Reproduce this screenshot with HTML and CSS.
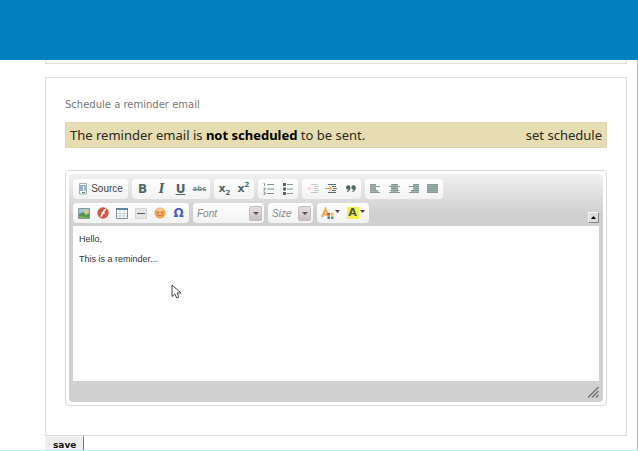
FILE: index.html
```html
<!DOCTYPE html>
<html lang="en">
<head>
  <meta charset="UTF-8">
  <meta name="viewport" content="width=device-width, initial-scale=1.0">
  <title>Schedule a reminder email</title>
  <link rel="stylesheet" href="styles.css">
</head>
<body>

  <header class="header"></header>

  <main class="content">
    <section class="panel panel-previous"></section>

    <form class="reminder">
      <section class="panel">
        <h2 class="panel-title">Schedule a reminder email</h2>

        <div class="status">
          <span>The reminder email is <b>not scheduled</b> to be sent.</span>
          <a href="#schedule">set schedule</a>
        </div>

        <div class="editor">
          <div class="editor-inner">
            <div class="toolbar">
              <div class="toolbar-row">
                <div class="group">
                  <button type="button" class="tool source">
                    <svg width="10" height="12" viewBox="0 0 10 12"><path d="M1.500 .5h7v10.500h-7z" fill="#f4fafa" stroke="#9fb0b0"/><path d="M2 2h3v6H2z" fill="#8fb4c8"/><path d="M5.500 2.500h1.500V8M4 9.500h3" fill="none" stroke="#5d7a86"/></svg>
                    Source
                  </button>
                </div>
                <div class="group">
                  <button type="button" class="tool bold" aria-label="Bold">B</button>
                  <button type="button" class="tool italic" aria-label="Italic">I</button>
                  <button type="button" class="tool underline" aria-label="Underline">U</button>
                  <button type="button" class="tool strike" aria-label="Strike Through">abc</button>
                </div>
                <div class="group">
                  <button type="button" class="tool script" aria-label="Subscript"><span>x<sub>2</sub></span></button>
                  <button type="button" class="tool script" aria-label="Superscript"><span>x<sup>2</sup></span></button>
                </div>
                <div class="group">
                  <button type="button" class="tool" aria-label="Numbered List">
                    <svg width="12" height="12" viewBox="0 0 12 12" stroke="#7d918f" fill="none"><path d="M.5 .5h1V3M.5 5h1.500v2H.5M.5 9h1.500v2.500H.5M4 1.500h7M4 6h7M4 10.500h7"/></svg>
                  </button>
                  <button type="button" class="tool" aria-label="Bulleted List">
                    <svg width="12" height="12" viewBox="0 0 12 12"><path d="M1 0h3v3H1zM1 4.500h3v3H1zM1 9h3v3H1z" fill="#4f6b6a"/><path d="M5 1.500h6M5 6h6M5 10.500h6" stroke="#8a9e9c"/></svg>
                  </button>
                </div>
                <div class="group">
                  <button type="button" class="tool" aria-label="Decrease Indent" disabled>
                    <svg width="13" height="10" viewBox="0 0 13 10" opacity=".35"><path d="M5 .5h7M8 2.500h5M8 4.500h4M8 6.500h5M5 8.500h7" stroke="#52706c"/><path d="M7 4.500H2M4 2.500l-2 2 2 2" fill="none" stroke="#e58a5c"/></svg>
                  </button>
                  <button type="button" class="tool" aria-label="Increase Indent">
                    <svg width="13" height="10" viewBox="0 0 13 10"><path d="M3 .5h8M7 2.500h4M8 4.500h4M7 6.500h4M3 8.500h8" stroke="#566f6b"/><path d="M0 4.500h6M4 2l2.500 2.500L4 7" fill="none" stroke="#ee9d4c"/></svg>
                  </button>
                  <button type="button" class="tool" aria-label="Block Quote">
                    <svg width="10" height="8" viewBox="0 0 10 8" fill="#4d6966"><path d="M0 2.500a2.200 2.200 0 0 1 4.500 0C4.500 5 3 6.500 1 7V6c1-.4 1.500-.9 1.600-1.500C1 4.700 0 3.800 0 2.500z"/><path d="M5.300 2.500a2.200 2.200 0 0 1 4.500 0C9.800 5 8.300 6.500 6.300 7V6c1-.4 1.500-.9 1.600-1.500-1.600.2-2.600-.7-2.600-2z"/></svg>
                  </button>
                </div>
                <div class="group">
                  <button type="button" class="tool" aria-label="Left Justify">
                    <svg width="11" height="10" viewBox="0 0 11 10" stroke="#839996"><path d="M0 .5h6M0 2.500h10M0 4.500h6M0 6.500h8M0 8.500h10"/><path d="M0 1.500h6M0 3.500h6M0 5.500h6M0 7.500h8" opacity=".7"/></svg>
                  </button>
                  <button type="button" class="tool" aria-label="Center Justify">
                    <svg width="11" height="10" viewBox="0 0 11 10" stroke="#839996"><path d="M2 .5h7M0 2.500h11M2 4.500h7M1 6.500h9M0 8.500h11"/><path d="M2 1.500h7M2 3.500h7M2 5.500h7M2 7.500h7" opacity=".7"/></svg>
                  </button>
                  <button type="button" class="tool" aria-label="Right Justify">
                    <svg width="11" height="10" viewBox="0 0 11 10" stroke="#839996"><path d="M5 .5h6M1 2.500h10M5 4.500h6M3 6.500h8M1 8.500h10"/><path d="M5 1.500h6M5 3.500h6M5 5.500h6M3 7.500h8" opacity=".7"/></svg>
                  </button>
                  <button type="button" class="tool" aria-label="Block Justify">
                    <svg width="11" height="10" viewBox="0 0 11 10"><path d="M0 0h11v9H0z" fill="#9badab"/><path d="M0 .5h11M0 2.500h11M0 4.500h11M0 6.500h11M0 8.500h11" stroke="#839996"/></svg>
                  </button>
                </div>
              </div>

              <div class="toolbar-row">
                <div class="group">
                  <button type="button" class="tool" aria-label="Image">
                    <svg width="12" height="11" viewBox="0 0 12 11"><path d="M.5.5h11v10H.5z" fill="#9fc9dc" stroke="#809b9e"/><path d="M1 6l4-2 3 3 3-2v5H1z" fill="#5a9550"/><path d="M1 8l5 .5L11 10H1z" fill="#7cb058"/><circle cx="8.500" cy="3.500" r="2" fill="#f8c55a"/></svg>
                  </button>
                  <button type="button" class="tool" aria-label="Flash">
                    <svg width="12" height="12" viewBox="0 0 12 12"><circle cx="6" cy="6" r="5.700" fill="#c9594a"/><path d="M9 2.500C6 2.500 6 9 3.500 9.500M4.500 6h3.200" fill="none" stroke="#fff" stroke-width="1.400"/></svg>
                  </button>
                  <button type="button" class="tool" aria-label="Table">
                    <svg width="12" height="11" viewBox="0 0 12 11"><path d="M.5.5h11v10H.5z" fill="#fff" stroke="#7890a2"/><path d="M0 0h12v2H0z" fill="#5f86a8"/><path d="M1 5.500h10M1 8h10M4 2v8M8 2v8" stroke="#c3d1d6"/></svg>
                  </button>
                  <button type="button" class="tool" aria-label="Horizontal Line">
                    <svg width="12" height="11" viewBox="0 0 12 11"><path d="M.5.5h11v10H.5z" fill="#e4e6e6" stroke="#d2d5d5"/><path d="M2 5.500h8" stroke="#59605f"/></svg>
                  </button>
                  <button type="button" class="tool" aria-label="Smiley">
                    <svg width="12" height="12" viewBox="0 0 12 12"><circle cx="6" cy="6" r="5.500" fill="#f3a650"/><ellipse cx="6" cy="3" rx="3.500" ry="2" fill="#f9c788"/><circle cx="4" cy="5" r=".8" fill="#8d5b3e"/><circle cx="8" cy="5" r=".8" fill="#8d5b3e"/><path d="M3 7.500q3 2.500 6 0" fill="#fbe5d0" stroke="#cf6138"/></svg>
                  </button>
                  <button type="button" class="tool omega" aria-label="Special Character">Ω</button>
                </div>
                <div class="group combo combo-font">
                  <select aria-label="Font"><option>Font</option></select>
                  <span class="arrow"></span>
                </div>
                <div class="group combo combo-size">
                  <select aria-label="Size"><option>Size</option></select>
                  <span class="arrow"></span>
                </div>
                <div class="group">
                  <button type="button" class="tool color" aria-label="Text Color">
                    <svg width="19" height="12" viewBox="0 0 19 12"><path d="M1 10L4.500 2 8 10M2.500 7.500h4" fill="none" stroke="#f0a550" stroke-width="2"/><path d="M6.500 6H9v2.500H6.500z" fill="#d44e38"/><path d="M10 6h2.500v2.500H10z" fill="#e9b93a"/><path d="M6.500 9.500H9V12H6.500z" fill="#3f78d2"/><path d="M10 9.500h2.500V12H10z" fill="#4ba04a"/><path d="M14 3h5l-2.500 3z" fill="#444"/></svg>
                  </button>
                  <button type="button" class="tool color" aria-label="Background Color">
                    <span class="marker">A</span>
                    <svg width="5" height="12" viewBox="0 0 5 12"><path d="M0 3h5L2.500 6z" fill="#444"/></svg>
                  </button>
                </div>
                <button type="button" class="collapse" aria-label="Collapse Toolbar">
                  <svg width="5" height="3" viewBox="0 0 5 3"><path d="M0 3l2.500-3L5 3z" fill="#000"/></svg>
                </button>
              </div>
            </div>

            <textarea class="message" aria-label="Message">Hello,

This is a reminder...</textarea>

            <div class="editor-footer">
              <svg width="11" height="11" viewBox="0 0 11 11"><path d="M0 10.500L10.500 0M4 10.500L10.500 4M8 10.500L10.500 8" stroke="#777" stroke-width="1.500"/></svg>
            </div>
          </div>
        </div>
      </section>

      <button type="submit" class="save">save</button>
    </form>
  </main>

  <svg class="cursor" width="11" height="16" viewBox="0 0 11 16"><path d="M1 1v11.500l2.800-2.500 2 4 2.200-1-2-4H10z" fill="#fff" stroke="#444"/></svg>

</body>
</html>
```
FILE: styles.css
```css
* {
  box-sizing: border-box;
}

body {
  margin: 0;
  height: 100vh;
  overflow: hidden;
  display: flex;
  flex-direction: column;
  background-color: #fefefe;
  border-bottom: 1px solid #a8f6fc;
  font-family: Verdana, "DejaVu Sans", sans-serif;
}

button,
select,
textarea {
  margin: 0;
  font-family: inherit;
}

.header {
  flex: none;
  height: 60px;
  background-color: #0080bf;
}

.content {
  flex: 1;
  min-height: 0;
  overflow: hidden;
  padding: 0 10px 0 45px;
  border-right: 1px solid #b4b4b4;
}

.panel {
  padding: 20px 19px 29px;
  border: 1px solid #dcdcdc;
}

.panel-previous {
  padding: 0;
  height: 4px;
  margin-bottom: 13px;
  border-top: none;
}

.panel-title {
  margin: 0 0 11px;
  font-size: 10px;
  line-height: 13px;
  font-weight: normal;
  color: #777;
}

.status {
  display: flex;
  justify-content: space-between;
  padding: 4px;
  margin-bottom: 22px;
  border: 1px solid #dfd6b4;
  background-color: #e7ddb3;
  color: #2b281c;
  font-family: "Noto Sans", sans-serif;
  font-size: 13px;
  line-height: 16px;
}

.status b {
  color: #000;
}

.status a {
  color: inherit;
  text-decoration: none;
}

.editor {
  padding: 3px;
  border: 1px solid #d8d8d8;
  border-radius: 4px;
  background-color: #fff;
}

.editor-inner {
  padding: 5px 4px 0;
  border-radius: 4px;
  background: linear-gradient(#f0f0f0, #d0d0d0 40px);
}

.toolbar {
  display: flex;
  flex-direction: column;
  gap: 4px;
  margin-bottom: 3px;
}

.toolbar-row {
  display: flex;
  gap: 4px;
}

.group {
  display: flex;
  height: 20px;
  padding: 0 1px;
  border-radius: 4px;
  background: linear-gradient(#fff, #f2f2f2);
}

.tool {
  display: flex;
  align-items: center;
  justify-content: center;
  width: 19px;
  padding: 0;
  border: none;
  background: none;
  color: #4a6665;
  font-size: 12px;
  line-height: 14px;
}

.source {
  width: 53px;
  gap: 3px;
  color: #444;
  font-family: "Liberation Sans", Arial, sans-serif;
  font-size: 10px;
}

.bold,
.underline {
  font-weight: bold;
}

.underline {
  text-decoration: underline;
}

.italic {
  font-family: "DejaVu Serif", serif;
  font-style: italic;
  font-weight: bold;
}

.strike {
  color: #78908e;
  font-size: 7px;
  font-weight: bold;
  text-decoration: line-through;
}

.script {
  font-size: 11px;
  font-weight: bold;
}

.script sub,
.script sup {
  font-size: 7px;
  line-height: 0;
}

.omega {
  color: #4462c0;
  font-weight: bold;
}

.color {
  width: 25px;
  gap: 1px;
}

.marker {
  width: 12px;
  background-color: #f5f04a;
  color: #44584a;
  font-size: 11px;
  line-height: 12px;
  font-weight: bold;
}

.combo {
  align-items: center;
  padding: 0 2px 0 4px;
}

.combo-font {
  width: 71px;
}

.combo-size {
  width: 45px;
}

.combo select {
  flex: 1;
  min-width: 0;
  padding: 0;
  border: none;
  appearance: none;
  background: none;
  color: #888;
  font-family: "Liberation Sans", Arial, sans-serif;
  font-size: 10px;
  font-style: italic;
}

.arrow {
  display: flex;
  align-items: center;
  justify-content: center;
  width: 13px;
  height: 15px;
  border: 1px solid #c4bcc0;
  border-radius: 2px;
  background: linear-gradient(#e4dee1, #c8c0c4);
}

.arrow::before {
  content: "";
  border: 3px solid transparent;
  border-top-color: #555;
  border-bottom: none;
}

.collapse {
  display: flex;
  align-items: center;
  justify-content: center;
  align-self: flex-end;
  width: 11px;
  height: 11px;
  margin-left: auto;
  padding: 0;
  border: 1px solid;
  border-color: #f4f4f4 #888 #888 #f4f4f4;
  background-color: #dcdcdc;
}

.message {
  display: block;
  width: 100%;
  height: 155px;
  padding: 8px 6px;
  border: none;
  resize: none;
  background-color: #fefefe;
  color: #333;
  font-family: "Liberation Sans", Arial, sans-serif;
  font-size: 9px;
  line-height: 10px;
}

.editor-footer {
  display: flex;
  align-items: flex-end;
  justify-content: flex-end;
  height: 21px;
  padding-bottom: 4px;
}

.save {
  display: block;
  padding: 2px 7px;
  border: 1px solid;
  border-color: #f4f4f4 #777 #777 #f4f4f4;
  background-color: #eee;
  color: #111;
  font-size: 9px;
  line-height: 12px;
  font-weight: bold;
}

/* pointer resting over the message */
.cursor {
  position: absolute;
  left: 171px;
  top: 284px;
}
```
